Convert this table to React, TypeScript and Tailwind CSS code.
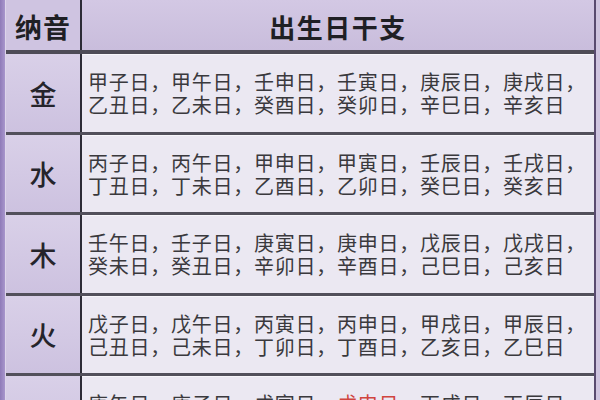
const rows = [
  {
    el: '金',
    a: ['甲子日', '甲午日', '壬申日', '壬寅日', '庚辰日', '庚戌日'],
    b: ['乙丑日', '乙未日', '癸酉日', '癸卯日', '辛巳日', '辛亥日'],
  },
  {
    el: '水',
    a: ['丙子日', '丙午日', '甲申日', '甲寅日', '壬辰日', '壬戌日'],
    b: ['丁丑日', '丁未日', '乙酉日', '乙卯日', '癸巳日', '癸亥日'],
  },
  {
    el: '木',
    a: ['壬午日', '壬子日', '庚寅日', '庚申日', '戊辰日', '戊戌日'],
    b: ['癸未日', '癸丑日', '辛卯日', '辛酉日', '己巳日', '己亥日'],
  },
  {
    el: '火',
    a: ['戊子日', '戊午日', '丙寅日', '丙申日', '甲戌日', '甲辰日'],
    b: ['己丑日', '己未日', '丁卯日', '丁酉日', '乙亥日', '乙巳日'],
  },
  {
    el: '土',
    a: ['庚午日', '庚子日', '戊寅日', '戊申日', '丙戌日', '丙辰日'],
    b: ['辛未日', '辛丑日', '己卯日', '己酉日', '丁亥日', '丁巳日'],
    red: '戊申日',
  },
];

function Line({ items, trailing, red }: { items: string[]; trailing: boolean; red?: string }) {
  return (
    <div className="whitespace-nowrap">
      {items.map((it, i) => (
        <span key={i}>
          <span className={it === red ? 'text-[#d0453f]' : ''}>{it}</span>
          {i < items.length - 1 || trailing ? '，' : ''}
        </span>
      ))}
    </div>
  );
}

export default function App() {
  return (
    <div className="w-[600px] h-[400px] overflow-hidden flex bg-[#c9bdda] font-['Noto_Sans_CJK_SC',sans-serif]">
      {/* left purple edge */}
      <div className="w-[6px] h-full bg-gradient-to-r from-[#8f7bb8] to-[#a896cc] border-r border-[#ddd5ea]" />

      <div className="w-[588px] flex flex-col">
        {/* header */}
        <div className="flex h-[54px] border-b-[4px] border-[#4e4c57] shrink-0">
          <div className="w-[76px] border-r-2 border-[#2c2b36] bg-[#cfc4e1] flex items-center justify-center pt-[4px] text-[27px] font-bold text-[#1f1f24] tracking-[1px]">
            纳音
          </div>
          <div className="flex-1 bg-gradient-to-b from-[#d3c8e4] to-[#c9bddc] flex items-center justify-center pt-[2px] text-[26px] font-bold text-[#1f1f24] tracking-[1.5px]">
            出生日干支
          </div>
        </div>

        {rows.map((r) => (
          <div key={r.el} className="flex h-[80.5px] border-b-[3px] border-[#52505b] shrink-0">
            <div className="w-[76px] border-r-2 border-[#2c2b36] bg-gradient-to-b from-[#d9d0e8] to-[#cdc2e0] flex items-center justify-center pt-[2px] text-[27px] font-medium text-[#25242b]">
              {r.el}
            </div>
            <div className="flex-1 bg-[#ebe8f2] border-t border-[#f7f6fa] flex flex-col justify-center pl-[6px] text-[20px] leading-[23px] tracking-[0.75px] text-[#3a393d]">
              <Line items={r.a} trailing red={r.red} />
              <Line items={r.b} trailing={false} red={r.red} />
            </div>
          </div>
        ))}
      </div>

      {/* right border */}
      <div className="w-[2px] h-full bg-[#584a6e]" />
      <div className="flex-1 h-full bg-[#cfc4df]" />
    </div>
  );
}
